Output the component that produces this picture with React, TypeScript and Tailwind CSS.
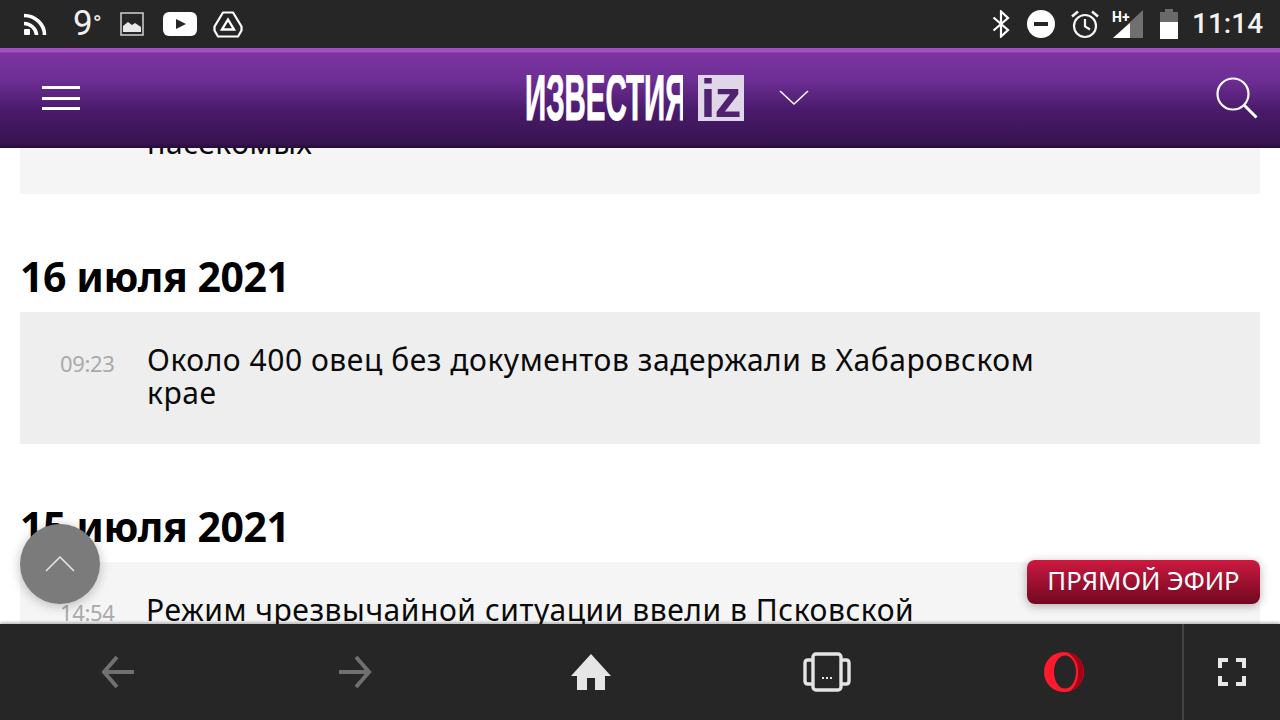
import React from "react";

const font = "[font-family:'Noto_Sans','Open_Sans',sans-serif]";

function Card({ time, title, tone, tight, className = "" }: { time?: string; title: React.ReactNode; tone: string; tight?: boolean; className?: string }) {
  return (
    <div className={`mx-[20px] flex pt-[31px] pb-[35px] ${tone} ${className}`}>
      <div className={`${tight ? "w-[126px] pt-[7px]" : "w-[127px] pt-[8px]"} pl-[40px] text-[22px] leading-[24px] tracking-[-0.35px] text-[#aaaaaa]`}>{time}</div>
      <div className="w-[920px] text-[30px] leading-[33px] tracking-[0.55px] text-[#0a0a0a]">{title}</div>
    </div>
  );
}

function DateHead({ children, className = "" }: { children: React.ReactNode; className?: string }) {
  return <div className={`mx-[20px] text-[41px] leading-[48px] font-bold tracking-[-0.45px] text-black ${className}`}>{children}</div>;
}

function StatusLeft() {
  return (
    <div className="flex items-center pl-[24px]">
      <svg width="23" height="22" viewBox="0 0 23 22" fill="none" stroke="#fff" strokeWidth="3.6">
        <path d="M0 2.5C11 2.5 20.5 11 20.5 22" />
        <path d="M0 10.5C6.5 10.5 12.5 16 12.5 22" />
        <rect x="0" y="16" width="6" height="6" rx="1" fill="#fff" stroke="none" />
      </svg>
      <div className="ml-[26px] w-[47px] pt-[3px] font-['Roboto',sans-serif] text-[35px] leading-[40px] text-[#f0f0f0]">
        9<span className="relative -top-[3px] text-[24px]">°</span>
      </div>
      <svg width="24" height="24" viewBox="0 0 24 24" className="-mt-[1px]">
        <rect x="1" y="1" width="22" height="22" fill="none" stroke="#c8c8c8" strokeWidth="1.6" />
        <path d="M3 20V14L8 10L12 13L15 11L21 15V20Z" fill="#e8e8e8" />
      </svg>
      <svg width="34" height="24" viewBox="0 0 34 24" className="ml-[19px]">
        <rect x="0" y="0" width="34" height="24" rx="6" fill="#fff" />
        <path d="M13 7L23 12L13 17Z" fill="#262626" />
      </svg>
      <svg width="30" height="27" viewBox="0 0 30 27" fill="none" stroke="#fff" className="ml-[16px]">
        <path d="M10 1.5H20L28.5 15.5V19.5L25 25.5H5L1.5 19.5V15.5Z" strokeWidth="2.2" strokeLinejoin="round" />
        <path d="M15 8.5L21 18.5H9Z" strokeWidth="2.4" />
      </svg>
    </div>
  );
}

function StatusRight() {
  return (
    <div className="flex items-center pr-[16px]">
      <svg width="18" height="28" viewBox="0 0 18 28" fill="none" stroke="#fff" strokeWidth="2.2">
        <path d="M1.5 7.5L16 20L9 26.5V1.5L16 8L1.5 20.5" />
      </svg>
      <div className="ml-[17px] flex h-[28px] w-[28px] items-center justify-center rounded-full bg-white">
        <div className="h-[4px] w-[14px] bg-[#262626]" />
      </div>
      <svg width="30" height="30" viewBox="0 0 30 30" fill="none" stroke="#f4f4f4" strokeWidth="2.2" className="ml-[15px]">
        <circle cx="15" cy="17" r="11" />
        <path d="M15 10V17.5L20 20.5" />
        <path d="M2 7.5L8 2.5M28 7.5L22 2.5" strokeWidth="2.6" />
      </svg>
      <svg width="32" height="30" viewBox="0 0 32 30" className="ml-[12px]">
        <path d="M31 1V29H1Z" fill="#707070" />
        <path d="M18 14V29H1Z" fill="#fff" />
        <text x="0" y="13" fontSize="14" fontWeight="700" fill="#fff" fontFamily="Roboto, sans-serif">H+</text>
      </svg>
      <svg width="20" height="30" viewBox="0 0 20 30" className="ml-[15px]">
        <path d="M6 0H14V3H19V30H1V3H6Z" fill="#6a6a6a" />
        <rect x="1" y="13" width="18" height="17" fill="#fff" />
      </svg>
      <div className="ml-[13px] w-[72px] font-['Roboto',sans-serif] text-[28px] leading-[36px] font-medium text-[#f2f2f2]">11:14</div>
    </div>
  );
}

function Header() {
  return (
    <div className="relative z-10 flex h-[100px] shrink-0 items-center justify-between bg-[linear-gradient(to_bottom,#a050bc_0,#a050bc_4px,#7b34a0_5px,#6f2f96_30px,#4a1b6c_62px,#36134f_96px,#240c38_100px)] pl-[42px] pr-[22px]">
      <div className="flex w-[38px] flex-col gap-[7.5px]">
        <div className="h-[3px] bg-white" />
        <div className="h-[3px] bg-white" />
        <div className="h-[3px] bg-white" />
      </div>
      <div className="ml-[37px] flex items-center">
        <div className="relative flex h-[46px] w-[158px] items-center overflow-hidden">
          <span className="origin-left scale-x-[0.46] whitespace-nowrap font-['Liberation_Sans',sans-serif] text-[64px] leading-[46px] font-bold text-white [-webkit-text-stroke:1px_white]">ИЗВЕСТИЯ</span>
        </div>
        <div className="ml-[15px] flex h-[46px] w-[46px] items-start justify-center overflow-hidden bg-[#e0d6e8] font-['Liberation_Sans',sans-serif] text-[54px] leading-[46px] font-bold tracking-[-1px] text-[#4f2270]">iz</div>
        <svg width="30" height="18" viewBox="0 0 30 18" fill="none" stroke="#fff" strokeWidth="1.6" className="ml-[35px]">
          <path d="M1 2L15 15L29 2" />
        </svg>
      </div>
      <svg width="42" height="42" viewBox="0 0 42 42" fill="none" stroke="#fff" strokeWidth="2.2">
        <circle cx="17" cy="17" r="15.5" />
        <path d="M28 28L40.5 40.5" strokeWidth="3" />
      </svg>
    </div>
  );
}

function Nav() {
  return (
    <div className="relative z-20 flex h-[96px] shrink-0 bg-[#262626] shadow-[0_-2px_2px_rgba(0,0,0,0.22)]">
      <div className="grid w-[1182px] grid-cols-5 items-center justify-items-center">
        <svg width="34" height="34" viewBox="0 0 34 34" fill="none" stroke="#707070" strokeWidth="4">
          <path d="M16 2L3 17L16 32M3 17H33" />
        </svg>
        <svg width="34" height="34" viewBox="0 0 34 34" fill="none" stroke="#707070" strokeWidth="4">
          <path d="M18 2L31 17L18 32M31 17H1" />
        </svg>
        <svg width="40" height="36" viewBox="0 0 40 36" fill="#e6e6e6">
          <path d="M20 0L40 22H34V36H24V24H16V36H6V22H0Z" />
        </svg>
        <svg width="48" height="40" viewBox="0 0 48 40" fill="none" stroke="#e4e4e4" strokeWidth="3.4">
          <rect x="10" y="2" width="28" height="36" rx="3" />
          <path d="M10 8H5C3 8 2 9 2 11V29C2 31 3 32 5 32H10M38 8H43C45 8 46 9 46 11V29C46 31 45 32 43 32H38" />
          <path d="M19 26H29" strokeWidth="2" strokeDasharray="2 2" />
        </svg>
        <svg width="40" height="40" viewBox="0 0 40 40">
          <circle cx="20" cy="20" r="20" fill="#ff1b2d" />
          <ellipse cx="21" cy="20" rx="11" ry="16.5" fill="#262626" />
          <path d="M21 0A20 20 0 0 1 26 39C32 35 34 27 34 20C34 12 31 5 24 1Z" fill="#a70014" />
        </svg>
      </div>
      <div className="w-[2px] bg-[#444444]" />
      <div className="flex flex-1 items-center justify-center">
        <svg width="28" height="28" viewBox="0 0 28 28" fill="none" stroke="#e8e8e8" strokeWidth="4">
          <path d="M10 2H2V10M18 2H26V10M10 26H2V18M18 26H26V18" />
        </svg>
      </div>
    </div>
  );
}

export default function App() {
  return (
    <div className={`relative flex h-[720px] w-[1280px] flex-col overflow-hidden bg-white ${font}`}>
      <div className="flex h-[48px] shrink-0 items-center justify-between bg-[#262626]">
        <StatusLeft />
        <StatusRight />
      </div>
      <Header />
      <div className="relative flex-1 overflow-hidden">
        <Card tone="bg-[#f5f5f5]" title="насекомых" className="-mt-[53px]" />
        <DateHead className="mt-[58px]">16 июля 2021</DateHead>
        <Card tone="mt-[12px] bg-[#eeeeee]" time="09:23" title={<>Около 400 овец без документов задержали в Хабаровском<br />крае</>} />
        <DateHead className="mt-[58px]">15 июля 2021</DateHead>
        <Card tone="mt-[12px] bg-[#f5f5f5]" time="14:54" tight title="Режим чрезвычайной ситуации ввели в Псковской" />
        <button className="absolute top-[376px] left-[20px] flex h-[80px] w-[80px] items-center justify-center rounded-full bg-[#7b7b7b] shadow-[0_2px_12px_rgba(0,0,0,0.25)]">
          <svg width="30" height="18" viewBox="0 0 30 18" fill="none" stroke="#e8e8e8" strokeWidth="1.5"><path d="M1 16L15 2L29 16" /></svg>
        </button>
        <button className="absolute top-[412px] right-[20px] flex h-[44px] w-[233px] items-center justify-center rounded-[8px] bg-[linear-gradient(to_bottom,#cb1a40,#720720)] pb-[3px] text-[25.7px] leading-[41px] text-white shadow-[0_2px_10px_rgba(0,0,0,0.3)]">ПРЯМОЙ ЭФИР</button>
      </div>
      <Nav />
    </div>
  );
}
